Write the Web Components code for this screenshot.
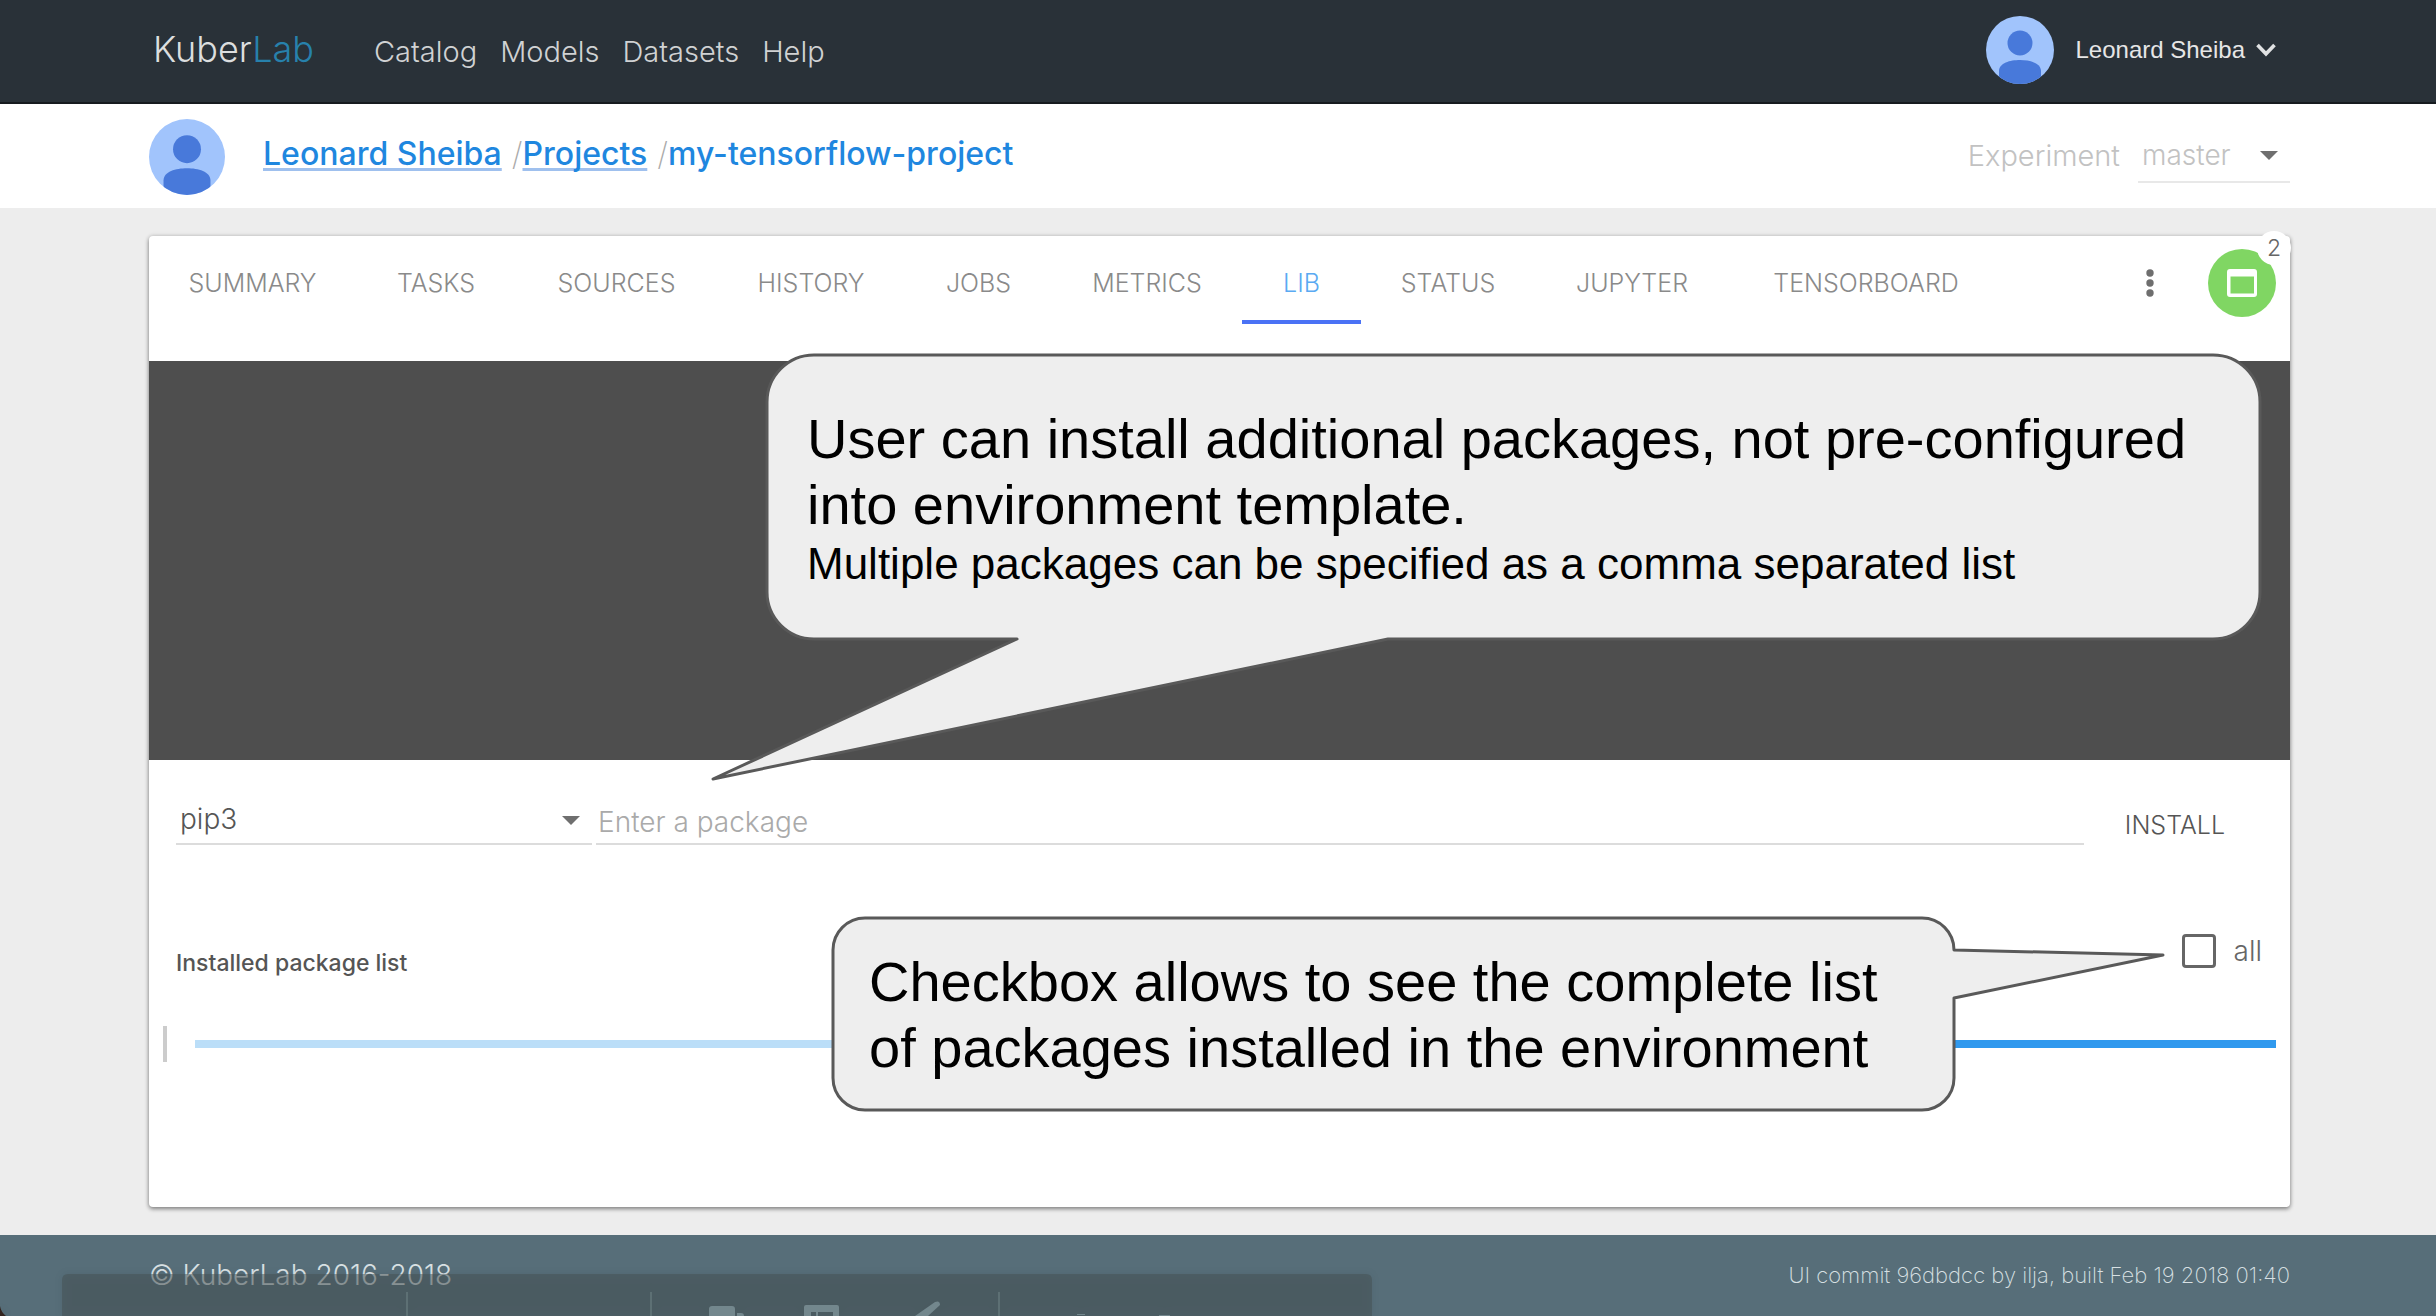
<!DOCTYPE html>
<html lang="en">
<head>
<meta charset="utf-8">
<title>KuberLab – my-tensorflow-project</title>
<style>
  :root {
    --ui: Inter, "Open Sans", sans-serif;
    --arial: "Liberation Sans", Arial, sans-serif;
    --edge-left: 149px;
    --edge-right: 146px;
  }
  body { margin: 0; background: #ededed; font-family: var(--ui); font-weight: 300; }
</style>
</head>
<body>
<kl-app></kl-app>

<template id="t-app">
  <style>
    :host { display: flex; flex-direction: column; min-height: 100vh; position: relative; overflow: hidden; }
    main { flex: 1; padding: 28px var(--edge-right) 28px var(--edge-left); display: flex; }
    kl-card { flex: 1; }
    .strong { font-size: 56px; line-height: 66px; margin: 0; }
    .small { font-size: 44px; line-height: 52px; margin: 0; }
  </style>
  <kl-header user="Leonard Sheiba"></kl-header>
  <kl-project-bar></kl-project-bar>
  <main>
    <kl-card>
      <kl-tab-bar slot="head">
        <kl-tab>SUMMARY</kl-tab><kl-tab>TASKS</kl-tab><kl-tab>SOURCES</kl-tab><kl-tab>HISTORY</kl-tab><kl-tab>JOBS</kl-tab><kl-tab>METRICS</kl-tab><kl-tab active>LIB</kl-tab><kl-tab>STATUS</kl-tab><kl-tab>JUPYTER</kl-tab><kl-tab>TENSORBOARD</kl-tab>
      </kl-tab-bar>
      <kl-lib></kl-lib>
    </kl-card>
  </main>
  <kl-footer></kl-footer>
  <kl-callout style="left:767px;top:355px;width:1493px;height:284px;--pad:51px 40px 0"
    path="M47 0H1446A47 47 0 0 1 1493 47V237A47 47 0 0 1 1446 284H621L-54 424L250 284H47A47 47 0 0 1 0 237V47A47 47 0 0 1 47 0Z">
    <p class="strong">User can install additional packages, not pre-configured<br>into environment template.</p>
    <p class="small">Multiple packages can be specified as a comma separated list</p>
  </kl-callout>
  <kl-callout style="left:833px;top:918px;width:1121px;height:192px;--pad:31px 36px 0"
    path="M32 0H1089A32 32 0 0 1 1121 32L1330 37L1121 80V160A32 32 0 0 1 1089 192H32A32 32 0 0 1 0 160V32A32 32 0 0 1 32 0Z">
    <p class="strong">Checkbox allows to see the complete list<br>of packages installed in the environment</p>
  </kl-callout>
  <kl-dock></kl-dock>
</template>

<template id="t-avatar">
  <style>:host { display: block; flex: none; width: 68px; height: 68px; } svg { display: block; width: 100%; height: 100%; border-radius: 50%; }</style>
  <svg viewBox="0 0 68 68" aria-hidden="true">
    <rect width="68" height="68" fill="#a1c4fc"/>
    <circle cx="34" cy="27" r="12.5" fill="#4879da"/>
    <path d="M13 68V55C13 47 24 44 34 44S55 47 55 55V68Z" fill="#4879da"/>
  </svg>
</template>

<template id="t-header">
  <style>
    :host { display: flex; align-items: center; justify-content: space-between; box-sizing: border-box; height: 104px;
      padding: 0 160px 2px 153px; background: #293138; border-bottom: 2px solid #161b1f; color: #dcdedf; }
    .left { display: flex; align-items: baseline; line-height: 40px; }
    .logo { font-size: 36px; color: #dcdedf; text-decoration: none; margin-right: 60px; }
    .logo span { color: #2781ac; }
    nav { display: flex; gap: 23px; font-size: 29px; }
    nav a { color: #d0d2d3; text-decoration: none; }
    .user { display: flex; align-items: center; }
    button { all: unset; display: flex; align-items: center; gap: 11px; margin-left: 22px; font: 400 24px/32px var(--arial); color: #e6e6e6; cursor: pointer; }
    svg { display: block; }
  </style>
  <div class="left">
    <a class="logo" href="#">Kuber<span>Lab</span></a>
    <nav><a href="#">Catalog</a><a href="#">Models</a><a href="#">Datasets</a><a href="#">Help</a></nav>
  </div>
  <div class="user">
    <kl-avatar></kl-avatar>
    <button type="button"><span id="name"></span>
      <svg width="20" height="14" viewBox="0 0 20 14" fill="none" stroke="#e0e2e3" stroke-width="3.6"><path d="M1.5 2L10 10.8L18.5 2"/></svg>
    </button>
  </div>
</template>

<template id="t-project-bar">
  <style>
    :host { display: flex; align-items: center; justify-content: space-between; box-sizing: border-box; height: 104px;
      padding: 1px var(--edge-right) 0 var(--edge-left); background: #fff; }
    .left { display: flex; align-items: center; gap: 38px; }
    kl-avatar { width: 76px; height: 76px; }
    .crumbs { display: flex; font-size: 32px; font-weight: 500; line-height: 40px; padding-bottom: 6px; color: #1f87df; }
    .crumbs a { color: #1f87df; text-decoration: underline; text-decoration-color: #9fc0ee; text-decoration-thickness: 3px; text-underline-offset: 3px; text-decoration-skip-ink: none; }
    i { font-style: normal; font-weight: 200; color: #aaa; padding-left: 10px; }
    .exp { display: flex; align-items: center; gap: 18px; font-size: 29px; color: #c2c2c2; padding-bottom: 2px; }
    kl-select { width: 152px; --line: #e8e8e8; --ink: #c2c2c2; --box: 54px; --end: 12px; }
  </style>
  <div class="left">
    <kl-avatar></kl-avatar>
    <div class="crumbs"><a href="#">Leonard Sheiba</a><i>/</i><a href="#">Projects</a><i>/</i><span>my-tensorflow-project</span></div>
  </div>
  <div class="exp"><span>Experiment</span><kl-select name="Experiment" value="master"></kl-select></div>
</template>

<template id="t-select">
  <style>
    :host { display: grid; align-items: center; }
    select, svg { grid-area: 1 / 1; }
    select { appearance: none; box-sizing: border-box; width: 100%; height: var(--box); margin: 0; padding: 0 0 0 4px; background: none;
      border: 0; border-bottom: 2px solid var(--line); border-radius: 0; color: var(--ink); font: inherit; font-size: 28px; outline: none; }
    svg { justify-self: end; margin-right: var(--end); pointer-events: none; }
  </style>
  <select><option></option></select>
  <svg width="18" height="9" viewBox="0 0 18 9"><path d="M0 0H18L9 9Z" fill="#6f6f6f"/></svg>
</template>

<template id="t-card">
  <style>
    :host { display: flex; flex-direction: column; background: #fff; border-radius: 4px;
      box-shadow: 0 2px 4px rgba(0,0,0,.42), 0 0 5px rgba(0,0,0,.14); }
  </style>
  <slot name="head"></slot><slot></slot>
</template>

<template id="t-tab-bar">
  <style>
    :host { display: flex; align-items: flex-start; height: 125px; }
    nav { flex: 1; display: grid; grid-template-columns: 207fr 160fr 201fr 188fr 147fr 190fr 119fr 174fr 194fr 274fr; }
    .tools { display: flex; align-items: center; height: 94px; padding: 0 14px 0 107px; }
    button { all: unset; cursor: pointer; display: block; }
    button svg { display: block; }
    .dots { padding: 0 54px 0 36px; }
    .dots, .win { flex: none; }
    .win { position: relative; width: 68px; height: 68px; border-radius: 50%; background: #80d663; }
    .win svg { margin: 20px 18px; }
    .badge { position: absolute; right: -15px; top: -18px; width: 34px; height: 34px; border-radius: 50%; background: #fff;
      text-align: center; font-size: 23px; line-height: 34px; color: #666; }
  </style>
  <nav><slot></slot></nav>
  <div class="tools">
    <button class="dots" type="button" aria-label="More"><svg width="8" height="28" viewBox="0 0 8 28" fill="#6e6e6e"><circle cx="4" cy="4" r="3.7"/><circle cx="4" cy="14" r="3.7"/><circle cx="4" cy="24" r="3.7"/></svg></button>
    <button class="win" type="button" aria-label="Windows"><svg width="32" height="28" viewBox="0 0 32 28"><path fill="#fff" fill-rule="evenodd" d="M4 0H28Q31 0 31 3V25Q31 28 28 28H4Q1 28 1 25V3Q1 0 4 0ZM4.500 7.500V24.500H28V7.500Z"/></svg><span class="badge">2</span></button>
  </div>
</template>

<template id="t-tab">
  <style>
    :host { display: block; }
    a { display: block; box-sizing: border-box; height: 88px; padding-top: 10px; border-bottom: 4px solid transparent; text-align: center;
      font-size: 25px; line-height: 74px; color: #8a8a8a; text-decoration: none; white-space: nowrap; }
    :host([active]) a { color: #5aaaf2; border-color: #4a72f5; }
  </style>
  <a href="#"><slot></slot></a>
</template>

<template id="t-lib">
  <style>
    :host { display: block; font-size: 28px; color: #555; padding-bottom: 145px; }
    .console { height: 399px; background: #4e4e4e; }
    form { display: flex; align-items: flex-end; padding: 35px 24px 0 27px; }
    kl-select { width: 416px; margin-right: 4px; --line: #dcdcdc; --ink: #555; --box: 50px; --end: 12px; }
    input.pkg { flex: 1; min-width: 0; box-sizing: border-box; height: 44px; padding: 0 0 0 2px; border: 0; border-bottom: 2px solid #dcdcdc;
      background: none; font: inherit; color: #555; outline: none; }
    input.pkg::placeholder { color: #aaa; opacity: 1; }
    form button { all: unset; cursor: pointer; padding: 0 41px; font-size: 25px; line-height: 40px; color: #555; }
    .row { display: flex; align-items: flex-end; justify-content: space-between; height: 52px; margin-top: 80px; padding: 0 28px 0 27px; }
    h2 { margin: 0; font-size: 23px; font-weight: 500; line-height: 28px; color: #555; }
    label { display: flex; align-items: center; gap: 18px; line-height: 52px; color: #666; }
    label input { appearance: none; box-sizing: border-box; width: 34px; height: 34px; margin: 0; border: 3px solid #666; border-radius: 4px; background: #fff; }
    .load { display: flex; align-items: center; gap: 28px; margin-top: 49px; padding: 0 14px; }
    .tick { width: 4px; height: 36px; background: #ccc; }
    .bar { flex: 1; height: 8px; background: linear-gradient(90deg, #bbdef8 60%, #3099ee 60%); }
  </style>
  <div class="console"></div>
  <form>
    <kl-select name="Package manager" value="pip3"></kl-select>
    <input class="pkg" type="text" placeholder="Enter a package" aria-label="Enter a package">
    <button type="button">INSTALL</button>
  </form>
  <div class="row"><h2>Installed package list</h2><label><input type="checkbox">all</label></div>
  <div class="load"><div class="tick"></div><div class="bar" role="progressbar" aria-label="Loading packages"></div></div>
</template>

<template id="t-callout">
  <style>
    :host { display: block; position: absolute; box-sizing: border-box; padding: var(--pad); font-family: var(--arial); font-weight: 400; color: #000; white-space: nowrap; }
    svg { position: absolute; inset: 0; width: 100%; height: 100%; overflow: visible; }
    div { position: relative; }
  </style>
  <svg aria-hidden="true"><path fill="#eee" stroke="#595959" stroke-width="3" stroke-linejoin="round"/></svg>
  <div><slot></slot></div>
</template>

<template id="t-footer">
  <style>
    :host { display: flex; justify-content: space-between; box-sizing: border-box; height: 81px; padding: 0 var(--edge-right) 0 var(--edge-left);
      background: #576e79; color: #d8e0e3; line-height: 80px; font-size: 28px; }
    small { font-size: 22px; font-weight: 200; }
  </style>
  <span>© KuberLab 2016-2018</span><small>UI commit 96dbdcc by ilja, built Feb 19 2018 01:40</small>
</template>

<template id="t-dock">
  <style>
    :host { display: block; position: absolute; left: 0; bottom: 0; pointer-events: none; }
    svg { display: block; filter: drop-shadow(0 0 4px rgba(0,0,0,.12)); }
  </style>
  <svg width="1380" height="42" viewBox="0 0 1380 42" aria-hidden="true">
    <path d="M62 42V6Q62 0 68 0H1366Q1372 0 1372 6V42Z" fill="rgb(67,80,81)" fill-opacity=".5"/>
    <path d="M407 18V42M651 18V42M999 18V42" stroke="#5d7074" stroke-width="2"/>
    <g fill="#73878d">
      <path d="M709 42V35Q709 32 712 32H732Q735 32 735 35V42ZM737 42V39H741Q744 39 744 42Z"/>
      <path fill-rule="evenodd" d="M804 42V33Q804 31 806 31H837Q839 31 839 33V42H833V38H818V42H816V38H811V42Z"/>
      <path d="M915 42L935 28Q940 26 940 31L928 42Z"/>
      <path d="M1077 40H1085V41H1077ZM1159 41H1170V42H1159Z"/>
    </g>
    <path d="M0 32Q1 38 6 42H0Z" fill="#33241f"/>
  </svg>
</template>

<script>
  const define = (name, setup) => customElements.define('kl-' + name, class extends HTMLElement {
    constructor() {
      super();
      this.attachShadow({ mode: 'open' }).append(document.getElementById('t-' + name).content.cloneNode(true));
    }
    connectedCallback() { if (setup) setup(this, this.shadowRoot); }
  });
  define('avatar');
  define('select', (el, root) => {
    root.querySelector('option').textContent = el.getAttribute('value');
    root.querySelector('select').setAttribute('aria-label', el.getAttribute('name'));
  });
  define('header', (el, root) => { root.getElementById('name').textContent = el.getAttribute('user'); });
  define('project-bar');
  define('card');
  define('tab');
  define('tab-bar');
  define('lib');
  define('callout', (el, root) => { root.querySelector('path').setAttribute('d', el.getAttribute('path')); });
  define('footer');
  define('dock');
  define('app');
</script>
</body>
</html>
